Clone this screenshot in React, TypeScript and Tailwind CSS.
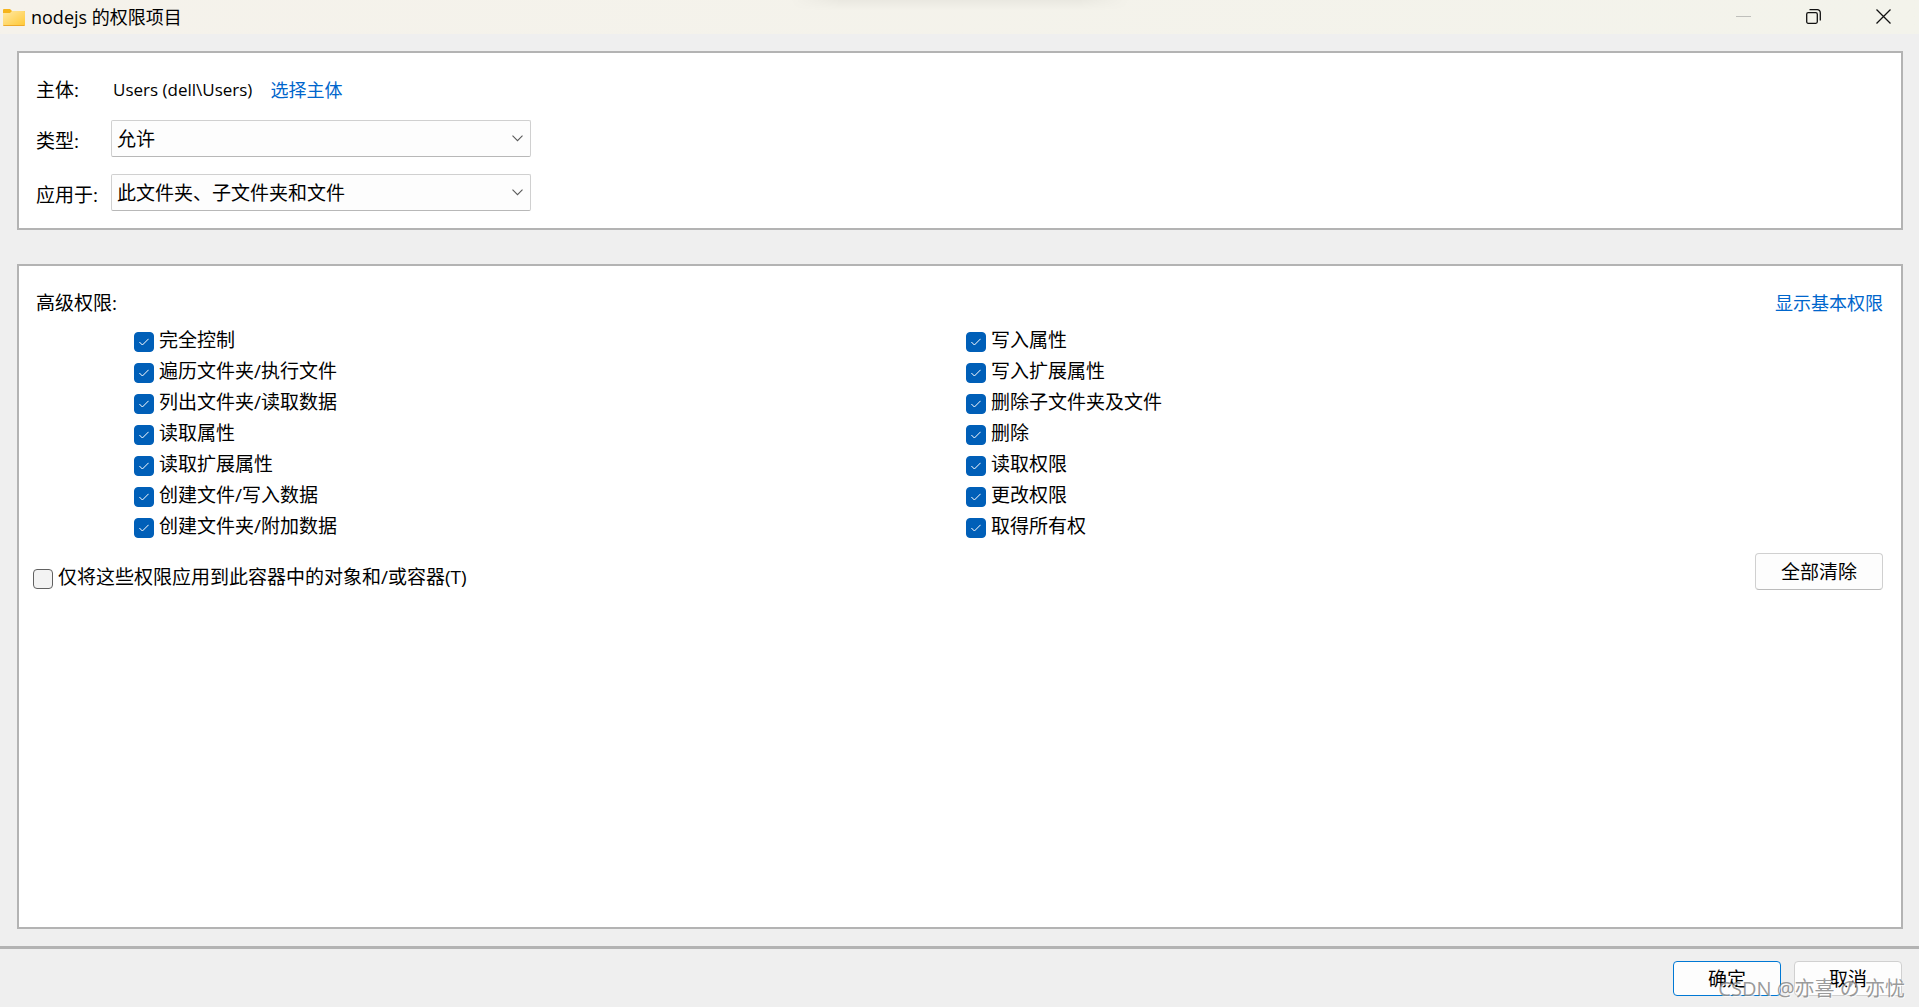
import { useState } from "react"

const leftPermissions = [
  "完全控制",
  "遍历文件夹/执行文件",
  "列出文件夹/读取数据",
  "读取属性",
  "读取扩展属性",
  "创建文件/写入数据",
  "创建文件夹/附加数据",
]

const rightPermissions = [
  "写入属性",
  "写入扩展属性",
  "删除子文件夹及文件",
  "删除",
  "读取权限",
  "更改权限",
  "取得所有权",
]

const allPermissions = [...leftPermissions, ...rightPermissions]

function FolderIcon() {
  return (
    <svg width="22" height="18" viewBox="0 0 22 18" aria-hidden="true">
      <defs>
        <linearGradient id="folder" x1="0" y1="0" x2="1" y2="1">
          <stop offset="0" stopColor="#ffe9a6" />
          <stop offset="1" stopColor="#ffc937" />
        </linearGradient>
      </defs>
      <path d="M0 2a1 1 0 0 1 1-1h6l2 2h12a1 1 0 0 1 1 1v4H0z" fill="#f5b41c" />
      <path d="M0 5h7l2-2h12a1 1 0 0 1 1 1v13H0z" fill="url(#folder)" />
      <path d="M0 17h22a1 1 0 0 1-1 1H1a1 1 0 0 1-1-1z" fill="#eda92a" />
    </svg>
  )
}

function TitleBar() {
  return (
    <header className="relative flex h-[34px] items-center bg-linear-to-r from-[#f5f2eb] to-[#f3f3eb] pr-px pb-px pl-[3px]">
      {/* soft shadow falling in from the top edge */}
      <div className="absolute top-0 left-1/2 h-2.5 w-[340px] -translate-x-1/2 bg-linear-to-b from-black/4 to-transparent mask-x-from-85% mask-x-to-100%" />
      <FolderIcon />
      <h1 className="ml-1.5 flex-1 text-[18px] leading-6">nodejs 的权限项目</h1>
      <div className="flex">
        <button type="button" aria-label="最小化" disabled className="flex h-[33px] w-[70px] items-center justify-center">
          <svg width="15" height="15" viewBox="0 0 15 15" stroke="#bfbfbb" fill="none">
            <path d="M0 7.5h15" />
          </svg>
        </button>
        <button type="button" aria-label="还原" className="flex h-[33px] w-[70px] items-center justify-center">
          <svg width="15" height="15" viewBox="0 0 15 15" stroke="#111" strokeWidth="1.3" fill="none">
            <rect x="0.7" y="3.7" width="10.6" height="10.6" rx="1.5" />
            <path d="M3.5 0.7h7.8a3 3 0 0 1 3 3v7.8" />
          </svg>
        </button>
        <button type="button" aria-label="关闭" className="flex h-[33px] w-[70px] items-center justify-center">
          <svg width="15" height="15" viewBox="0 0 15 15" stroke="#111" strokeWidth="1.3" fill="none">
            <path d="M0.5 0.5l14 14M14.5 0.5l-14 14" />
          </svg>
        </button>
      </div>
    </header>
  )
}

function SelectRow({ id, label, options }: { id: string; label: string; options: string[] }) {
  return (
    <div className="flex items-center">
      <label htmlFor={id} className="w-[75px] pt-1">{label}</label>
      <div className="grid w-[420px] items-center">
        <select
          id={id}
          className="col-start-1 row-start-1 h-[37px] appearance-none rounded-xs border border-[#d0d0d0] border-b-[#b8b8b8] bg-[#fdfdfd] pl-[5px] outline-none"
        >
          {options.map((o) => (
            <option key={o}>{o}</option>
          ))}
        </select>
        <svg
          className="pointer-events-none col-start-1 row-start-1 mr-2 justify-self-end"
          width="11" height="7" viewBox="0 0 11 7" fill="none" stroke="#5a5a5a" strokeWidth="1.1"
        >
          <path d="M0.5 0.7l5 5 5-5" />
        </svg>
      </div>
    </div>
  )
}

type CheckProps = { label: string; checked: boolean; onChange: (v: boolean) => void }

function Check({ label, checked, onChange }: CheckProps) {
  return (
    <label className="flex items-center gap-[5px]">
      <span className="grid place-items-center">
        <input
          type="checkbox"
          checked={checked}
          onChange={(e) => onChange(e.target.checked)}
          className="col-start-1 row-start-1 size-5 appearance-none rounded-sm border border-[#616161] bg-[#f3f3f3] checked:border-[#005fb8] checked:bg-[#005fb8]"
        />
        {checked && (
          <svg
            className="pointer-events-none col-start-1 row-start-1"
            width="10" height="8" viewBox="0 0 10 8" fill="none" stroke="#fff"
          >
            <path d="M0.4 4l3 3L9.6 0.8" />
          </svg>
        )}
      </span>
      <span className="pb-1 leading-6">{label}</span>
    </label>
  )
}

export default function App() {
  const [granted, setGranted] = useState<string[]>(allPermissions)
  const [onlyContainer, setOnlyContainer] = useState(false)

  const toggle = (name: string, on: boolean) => {
    setGranted(on ? [...granted, name] : granted.filter((g) => g !== name))
  }

  const column = (names: string[]) => (
    <ul>
      {names.map((name) => (
        <li key={name} className="flex h-[31px] items-center">
          <Check label={name} checked={granted.includes(name)} onChange={(v) => toggle(name, v)} />
        </li>
      ))}
    </ul>
  )

  return (
    <div className="relative flex min-h-screen flex-col bg-[#efefef] font-['Open_Sans','Noto_Sans_CJK_SC',sans-serif] text-[19px] leading-6 text-black">
      <TitleBar />

      <main className="flex flex-1 flex-col gap-[34px] pt-[17px] pr-4 pb-[17px] pl-[17px]">
        <section className="flex flex-col gap-[17px] border-2 border-[#b3b3b3] bg-white px-[17px] pt-[25px] pb-[17px]">
          <div className="flex items-center pb-px">
            <span className="w-[75px]">主体:</span>
            <span className="pl-0.5 text-[17px]">Users (dell\Users)</span>
            <a href="#" className="ml-[18px] text-[18px] text-[#0066cc]">选择主体</a>
          </div>
          <SelectRow id="type" label="类型:" options={["允许", "拒绝"]} />
          <SelectRow
            id="scope"
            label="应用于:"
            options={["此文件夹、子文件夹和文件", "只有该文件夹", "只有子文件夹", "只有文件"]}
          />
        </section>

        <section className="flex-1 border-2 border-[#b3b3b3] bg-white pt-[25px] pr-[18px] pl-3.5">
          <div className="flex items-center justify-between pl-[3px]">
            <h2>高级权限:</h2>
            <a href="#" className="text-[18px] text-[#0066cc]">显示基本权限</a>
          </div>
          <div className="mt-[11px] grid grid-cols-2 pr-[85px] pl-[101px]">
            {column(leftPermissions)}
            {column(rightPermissions)}
          </div>
          <div className="mt-2.5 flex items-start justify-between">
            <div className="pt-3">
              <Check
                label="仅将这些权限应用到此容器中的对象和/或容器(T)"
                checked={onlyContainer}
                onChange={setOnlyContainer}
              />
            </div>
            <button
              type="button"
              onClick={() => setGranted([])}
              className="h-[37px] w-32 rounded-sm border border-[#d0d0d0] border-b-[#bbb] bg-[#fdfdfd]"
            >
              全部清除
            </button>
          </div>
        </section>
      </main>

      <footer className="flex justify-end gap-[13px] border-t-[3px] border-[#b3b3b3] pt-3 pr-[17px] pb-[11px]">
        <button type="button" className="h-[35px] w-[108px] rounded-sm border border-[#0078d4] bg-[#fdfdfd]">确定</button>
        <button type="button" className="h-[35px] w-[108px] rounded-sm border border-[#d0d0d0] bg-[#fdfdfd]">取消</button>
      </footer>

      <p className="pointer-events-none absolute right-3.5 bottom-1.5 text-[20px] leading-6 text-[#808080]/80 text-shadow-[1px_1px_0_#ffffffb3]">
        CSDN @亦喜 の 亦忧
      </p>
    </div>
  )
}
